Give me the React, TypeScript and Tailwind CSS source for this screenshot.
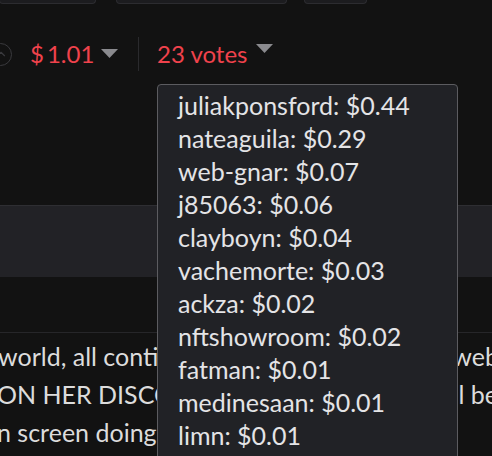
import { ChevronUp } from 'lucide-react';

const voters: [string, string][] = [
  ['juliakponsford', '$0.44'],
  ['nateaguila', '$0.29'],
  ['web-gnar', '$0.07'],
  ['j85063', '$0.06'],
  ['clayboyn', '$0.04'],
  ['vachemorte', '$0.03'],
  ['ackza', '$0.02'],
  ['nftshowroom', '$0.02'],
  ['fatman', '$0.01'],
  ['medinesaan', '$0.01'],
  ['limn', '$0.01'],
];

function Caret({ className = '' }: { className?: string }) {
  return (
    <svg width="17" height="9" viewBox="0 0 17 9" className={`shrink-0 ${className}`}>
      <path d="M0 0 H17 L8.5 9 Z" fill="#8a8a8e" />
    </svg>
  );
}

export default function App() {
  return (
    <div className="relative w-[492px] h-[456px] overflow-hidden bg-[#121212] font-['Lato',sans-serif] text-[25px]">
      {/* tab buttons cut off at top */}
      <div className="flex h-[4px]">
        <div className="w-[97px] -ml-[1px] rounded-b-[6px] border-x border-b border-[#2c2c30] bg-[#1c1c1f]" />
        <div className="ml-[20px] w-[171px] rounded-b-[6px] border-x border-b border-[#2c2c30] bg-[#1c1c1f]" />
        <div className="ml-[17px] w-[63px] rounded-b-[6px] border-x border-b border-[#2c2c30] bg-[#1c1c1f]" />
      </div>

      {/* vote row */}
      <div className="mt-[33px] flex h-[34px] items-center text-[24px] text-[#f0424c]">
        <div className="-ml-[11px] flex h-[23px] w-[23px] shrink-0 items-center justify-center rounded-full border border-[#3a3a3e]">
          <ChevronUp size={14} className="text-[#3a3a3e]" />
        </div>
        <div className="ml-[18px] flex w-[71px] shrink-0 leading-none">
          <span>$</span>
          <span className="ml-[3px]">1.01</span>
        </div>
        <Caret className="mt-[-2px]" />
        <div className="ml-[20px] h-[34px] w-px shrink-0 bg-[#2a2a2d]" />
        <span className="ml-[18px] w-[90px] shrink-0 whitespace-nowrap leading-none">23 votes</span>
        <Caret className="ml-[9px] mt-[-12px]" />
      </div>

      {/* band */}
      <div className="mt-[134px] h-[72px] border-t border-[#2e2e32] bg-[#222226]" />

      <div className="mt-[55px] border-t border-[#262629]" />

      {/* post body text */}
      <div className="mt-[4px] leading-[38px] text-[#dcdcdc]">
        <div className="flex justify-between whitespace-nowrap">
          <span className="-ml-[2px]">world, all continents</span>
          <span className="-mr-[7px]">web</span>
        </div>
        <div className="flex justify-between whitespace-nowrap">
          <span className="-ml-[3px]">ON HER DISCORD</span>
          <span className="-mr-[6px]">l be</span>
        </div>
        <div className="flex justify-between whitespace-nowrap">
          <span className="-ml-[3px]">n screen doing</span>
        </div>
      </div>

      {/* voters popover */}
      <div className="absolute left-[157px] top-[84px] h-[400px] w-[301px] rounded-[4px] border border-[#5c5c60] bg-[#212226] pl-[20px] pt-[4px] leading-[33px] text-[#e4e4e6]">
        {voters.map(([name, amount]) => (
          <div key={name} className="whitespace-nowrap">
            {name}: {amount}
          </div>
        ))}
      </div>
    </div>
  );
}
